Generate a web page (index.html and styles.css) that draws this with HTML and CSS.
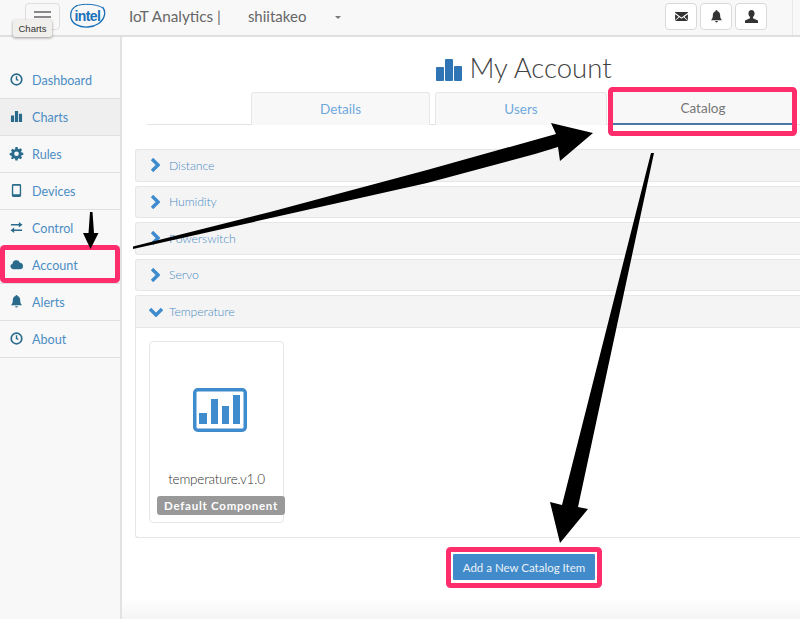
FILE: index.html
```html
<!DOCTYPE html>
<html lang="en">
<head>
<meta charset="utf-8">
<title>My Account</title>
<link rel="stylesheet" href="styles.css">
</head>
<body>
<div class="page">
  <header class="topbar">
    <div class="hamburger"><span></span><span></span><span></span></div>
    <svg class="intel" viewBox="0 0 36 26" width="36" height="26">
      <path d="M7 2.500C2 5 0 10 1 15c1.500 6 8 9.500 17 9 8-.5 15-5 16.500-12 .6-3-.4-6-2-8" fill="none" stroke="#1b72b8" stroke-width="1.300"/>
      <path d="M6 3C12 .5 26 .5 33 5" fill="none" stroke="#1b72b8" stroke-width="1"/>
      <text x="4.500" y="17.500" class="intel-word">intel</text>
    </svg>
    <div class="brand">IoT Analytics |</div>
    <div class="user">shiitakeo</div>
    <div class="caret"></div>
    <div class="top-actions">
      <button class="top-btn"><svg viewBox="0 0 14 12" width="13" height="11"><path d="M0 1h14v1L7 7 0 2zM0 3.500l3.800 2.700L0 10zM14 3.500l-3.800 2.700L14 10zM4.700 6.900 7 8.500l2.300-1.600L14 11H0z" fill="#333"/></svg></button>
      <button class="top-btn"><svg viewBox="0 0 12 14" width="11" height="13"><path d="M6 0a1 1 0 0 1 1 1.200C9 1.800 10 3.500 10 6c0 2.500.7 3.700 2 5H0c1.300-1.300 2-2.500 2-5 0-2.500 1-4.200 3-4.800A1 1 0 0 1 6 0zM4.500 12h3a1.500 1.500 0 0 1-3 0z" fill="#333"/></svg></button>
      <button class="top-btn"><svg viewBox="0 0 14 14" width="13" height="13"><path d="M7 0c2 0 3.300 1.500 3.300 3.700 0 1.500-.7 3-1.700 3.800v1.300L14 11.300V14H0v-2.700l5.400-2.500V7.500c-1-.8-1.700-2.300-1.700-3.800C3.700 1.500 5 0 7 0z" fill="#333"/></svg></button>
    </div>
    <div class="top-rule"></div>
  </header>

  <div class="body-row">
    <nav class="sidebar">
      <a class="nav-item"><svg class="nav-icon" viewBox="0 0 14 14"><circle cx="7" cy="7" r="5.700" fill="none" stroke="currentColor" stroke-width="1.800"/><path d="M7 3.500V7l2 1" fill="none" stroke="currentColor" stroke-width="1.500"/></svg>Dashboard</a>
      <a class="nav-item nav-current"><svg class="nav-icon" viewBox="0 0 14 14"><path d="M1 6h3.400v7H1zM5.300 1h3.400v12H5.300zM9.600 4H13v9H9.600z" fill="currentColor"/></svg>Charts</a>
      <a class="nav-item"><svg class="nav-icon" viewBox="0 0 14 14"><path fill-rule="evenodd" fill="currentColor" d="M5.800 0h2.400l.3 1.900 1.200.5 1.600-1.100 1.700 1.700-1.100 1.600.5 1.200 1.900.3v2.400l-1.900.3-.5 1.200 1.100 1.600-1.700 1.700-1.600-1.100-1.200.5-.3 1.900H5.800l-.3-1.900-1.200-.5-1.600 1.100L1 12.100l1.100-1.600-.5-1.200L-.3 9V6.600l1.900-.3.5-1.200L1 3.500l1.700-1.700 1.600 1.100 1.200-.5zM7 4.800a2.500 2.500 0 1 0 0 5 2.500 2.500 0 0 0 0-5z"/></svg>Rules</a>
      <a class="nav-item"><svg class="nav-icon" viewBox="0 0 14 14"><path fill-rule="evenodd" fill="currentColor" d="M3.500 0h7A1.500 1.500 0 0 1 12 1.500v11a1.500 1.500 0 0 1-1.500 1.500h-7A1.500 1.500 0 0 1 2 12.500v-11A1.500 1.500 0 0 1 3.500 0zM3.500 2v9h7V2z"/></svg>Devices</a>
      <a class="nav-item"><svg class="nav-icon" viewBox="0 0 14 14"><path fill="currentColor" d="M1 3.200h8.500V1L13.500 4 9.500 7V4.800H1zM13 9.200H4.500V7L.5 10l4 3v-2.200H13z"/></svg>Control</a>
      <a class="nav-item"><svg class="nav-icon" viewBox="0 0 14 14"><path fill="currentColor" d="M3.200 12a3 3 0 0 1-.5-5.900 4.200 4.200 0 0 1 8-1.100A3.500 3.500 0 0 1 14 8.500 3.500 3.500 0 0 1 10.500 12z"/></svg>Account</a>
      <a class="nav-item"><svg class="nav-icon" viewBox="0 0 12 14"><path d="M6 0a1 1 0 0 1 1 1.200C9 1.800 10 3.500 10 6c0 2.500.7 3.700 2 5H0c1.300-1.300 2-2.500 2-5 0-2.500 1-4.200 3-4.800A1 1 0 0 1 6 0zM4.500 12h3a1.500 1.500 0 0 1-3 0z" fill="currentColor"/></svg>Alerts</a>
      <a class="nav-item"><svg class="nav-icon" viewBox="0 0 14 14"><circle cx="7" cy="7" r="5.700" fill="none" stroke="currentColor" stroke-width="1.800"/><path d="M7 3.500V7l2 1" fill="none" stroke="currentColor" stroke-width="1.500"/></svg>About</a>
    </nav>

    <main class="panel">
      <h1 class="title"><svg class="title-icon" viewBox="0 0 26 23" width="26" height="23"><path d="M1 9h6a1 1 0 0 1 1 1v12a1 1 0 0 1-1 1H1a1 1 0 0 1-1-1V10a1 1 0 0 1 1-1zM10 1h6a1 1 0 0 1 1 1v20a1 1 0 0 1-1 1h-6a1 1 0 0 1-1-1V2a1 1 0 0 1 1-1zM19 8h6a1 1 0 0 1 1 1v13a1 1 0 0 1-1 1h-6a1 1 0 0 1-1-1V9a1 1 0 0 1 1-1z" fill="#2f75b5"/></svg>My Account</h1>
      <div class="tabs">
        <a class="tab">Details</a>
        <a class="tab tab-mid">Users</a>
        <a class="tab tab-active">Catalog</a>
      </div>

      <section class="accordion">
        <div class="acc-row"><svg class="chev" viewBox="0 0 10 14"><path d="M2 1l6 6-6 6" fill="none" stroke="currentColor" stroke-width="3.400"/></svg>Distance</div>
        <div class="acc-row"><svg class="chev" viewBox="0 0 10 14"><path d="M2 1l6 6-6 6" fill="none" stroke="currentColor" stroke-width="3.400"/></svg>Humidity</div>
        <div class="acc-row"><svg class="chev" viewBox="0 0 10 14"><path d="M2 1l6 6-6 6" fill="none" stroke="currentColor" stroke-width="3.400"/></svg>Powerswitch</div>
        <div class="acc-row"><svg class="chev" viewBox="0 0 10 14"><path d="M2 1l6 6-6 6" fill="none" stroke="currentColor" stroke-width="3.400"/></svg>Servo</div>
        <div class="acc-open">
          <div class="acc-row acc-head"><svg class="chev chev-down" viewBox="0 0 14 10"><path d="M1 2l6 6 6-6" fill="none" stroke="currentColor" stroke-width="3.400"/></svg>Temperature</div>
          <div class="acc-body">
            <div class="card">
              <svg class="card-icon" viewBox="0 0 54 44" width="54" height="44"><rect x="1.750" y="1.750" width="50.500" height="40.500" rx="3" fill="none" stroke="#3e8bcd" stroke-width="3.500"/><path d="M6 25h8v11H6zM18 11h7v25h-7zM29 18h7v18h-7zM40 7h7v29h-7z" fill="#3e8bcd"/></svg>
              <div class="card-name">temperature.v1.0</div>
              <div class="badge">Default Component</div>
            </div>
          </div>
        </div>
      </section>

      <div class="actions"><button class="primary">Add a New Catalog Item</button></div>
    </main>
  </div>

  <div class="tooltip">Charts</div>

  <svg class="annotations" viewBox="0 0 800 619" width="800" height="619">
    <rect class="mark" x="2.500" y="247.500" width="115" height="33" rx="2"/>
    <rect class="mark" x="610.500" y="89.500" width="184" height="44" rx="2"/>
    <rect class="mark" x="448.500" y="549.500" width="151" height="36" rx="2"/>
    <path class="arrow" d="M90 212h2.500l1.500 21h4.500l-8 16-7.500-16h5.500z"/>
    <path class="arrow" d="M133 246.500 270 212 427 170 556 134 551 123 593 133 560 161 558 147 535 154 427 183 133 249z"/>
    <path class="arrow" d="M651 153h3L578 507l10 2-28 34-10-41 12 3z"/>
  </svg>
</div>
</body>
</html>
```
FILE: styles.css
```css
* { box-sizing: border-box; }
html, body { margin: 0; padding: 0; }
body { font-family: Lato, "Open Sans", sans-serif; color: #555; background: #f8f8f8; }
.page { position: relative; width: 800px; height: 619px; overflow: hidden; background: #f8f8f8; }

.topbar { display: flex; align-items: center; height: 37px; padding: 0 0 4px 25px; border-bottom: 2px solid #dfdfdf; }
.hamburger { display: flex; flex-direction: column; justify-content: flex-start; gap: 3.500px; width: 35px; height: 27px; margin-top: 2px; padding: 7px 8px 0; border: 1px solid #dedede; border-radius: 4px; }
.hamburger span { display: block; height: 1.500px; background: #888; }
.intel { margin-left: 10px; margin-top: 0; }
.intel-word { font-family: "Liberation Sans", sans-serif; font-size: 14px; font-weight: 700; fill: #1b72b8; letter-spacing: -.6px; }
.brand { margin-left: 23px; font-size: 15.300px; color: #666; white-space: nowrap; }
.user { margin-left: 27px; font-size: 15px; color: #666; }
.caret { margin-left: 29px; margin-top: 4px; border-top: 3px solid #777; border-left: 3px solid transparent; border-right: 3px solid transparent; }
.top-actions { display: flex; gap: 3px; margin-left: auto; margin-right: 33px; margin-top: 2px; }
.top-rule { position: absolute; right: 7px; top: 0; width: 1px; height: 35px; background: #e8e8e8; }
.top-btn { display: flex; align-items: center; justify-content: center; width: 32px; height: 27px; padding: 0; background: #fff; border: 1px solid #d9d9d9; border-radius: 4px; }

.body-row { display: flex; height: 582px; }
.sidebar { width: 120px; flex: none; padding-top: 25px; }
.nav-item { display: flex; align-items: center; gap: 9px; height: 37px; padding-left: 10px; font-size: 12.600px; color: #4c8dc4; border-bottom: 1px solid #dfdfdf; }
.nav-current { background: #efefef; }
.nav-icon { width: 13px; height: 13px; flex: none; margin-top: -2px; color: #2a6b8c; overflow: visible; }

.panel { flex: 1; min-width: 0; padding-left: 13px; background: linear-gradient(#fff 560px, #f4f4f4); border-left: 2px solid #e2e2e2; }
.title { display: flex; align-items: center; justify-content: center; gap: 7px; height: 55px; margin: 0 0 0 113px; padding-top: 6px; font-size: 27.500px; font-weight: 300; color: #444; }
.title-icon { margin-top: 3px; }
.tabs { display: flex; gap: 5px; height: 33px; margin-left: 12px; padding-left: 104px; border-bottom: 1px solid #e2e2e2; }
.tab { display: flex; align-items: center; justify-content: center; width: 179px; height: 33px; font-size: 13.500px; color: #6fa8dc; background: #f8f8f8; border: 1px solid #e6e6e6; border-bottom: 0; border-radius: 3px 3px 0 0; }
.tab-mid { width: 172px; }
.tab-active { width: 180px; padding-left: 2px; color: #777; border: 0; border-bottom: 2px solid #4a78a5; }

.accordion { display: flex; flex-direction: column; gap: 4px; margin-top: 24px; }
.acc-row { display: flex; align-items: center; height: 32.500px; padding-left: 14px; font-size: 12.300px; font-weight: 300; letter-spacing: -.1px; color: #4c8dc4; background: #f4f4f4; border: 1px solid #e6e6e6; border-right: 0; border-radius: 3px 0 0 3px; }
.chev { width: 10px; height: 14px; margin-right: 9px; color: #3e8bcd; }
.chev-down { width: 14px; height: 10px; margin-right: 6px; margin-left: -1px; }
.acc-open { border: 1px solid #e6e6e6; border-right: 0; border-radius: 3px 0 0 3px; background: #fff; }
.acc-head { border: 0; border-bottom: 1px solid #e6e6e6; border-radius: 0; height: 32px; }
.acc-body { height: 209px; padding: 13px 13px 14px; }
.card { position: relative; display: flex; flex-direction: column; align-items: center; width: 135px; height: 182px; padding-top: 46px; border: 1px solid #e6e6e6; border-radius: 4px; }
.card-icon { margin-left: 7px; }
.card-name { margin-top: 39px; font-size: 13.500px; font-weight: 300; color: #333; letter-spacing: -.2px; }
.badge { position: absolute; left: 7px; top: 154px; width: 128px; height: 19px; font-size: 11.500px; font-weight: 700; line-height: 19px; text-align: center; color: #fff; letter-spacing: .75px; background: #999; border-radius: 3px; }

.actions { display: flex; justify-content: flex-start; margin-top: 15px; padding-left: 317px; }
.primary { width: 144px; height: 28px; padding: 0; font-family: inherit; font-size: 11.500px; color: #e9f1f8; background: #428bca; border: 1px solid #fff; border-radius: 2px; }

.tooltip { position: absolute; left: 13px; top: 20px; width: 39px; height: 17px; font-family: "Liberation Sans", sans-serif; font-size: 9.500px; line-height: 17px; text-align: center; color: #333; background: #f0efec; border-radius: 2px; box-shadow: 0 1px 3px rgba(0,0,0,.4); }

.annotations { position: absolute; left: 0; top: 0; pointer-events: none; }
.mark { fill: none; stroke: #ff2d6b; stroke-width: 5; }
.arrow { fill: #000; }
```
